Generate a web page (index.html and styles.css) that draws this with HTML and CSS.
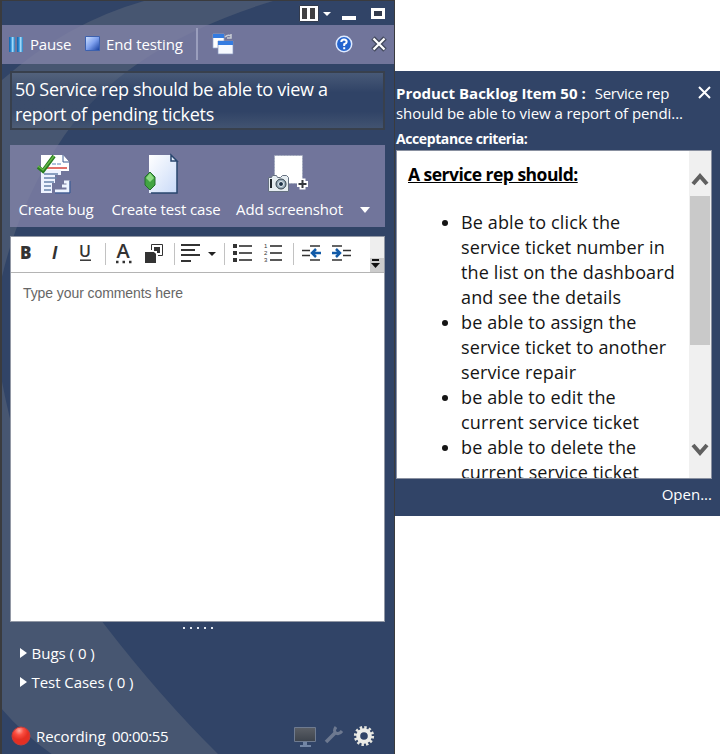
FILE: index.html
```
<!DOCTYPE html>
<html lang="en"><head><meta charset="utf-8"><title>Test Runner</title><link rel="stylesheet" href="styles.css"></head>
<body>
<div class="app">
<section class="runner">
  <svg class="backdrop" width="395" height="754" viewBox="0 0 395 754"><path fill="#475671" d="M143 0Q65 22 0 80V280Q18 200 63 135Q125 45 272 0ZM0 375Q25 515 103 623Q160 697 218 754H52Q22 733 0 707Z"/></svg>
  <div class="titlebar">
    <svg width="90" height="20" viewBox="0 0 90 20"><path fill="#fff" stroke="#333b4d" d="M2.500 .5h19v16h-19z"/><path fill="#414042" d="M5 3h5v11H5zm8 0h5v11h-5z"/><path fill="#fff" d="M26 7h8l-4 4zM45 11h14v4H45zM74 3h14v11H74z"/><path fill="#333b4d" d="M77 6h8v5h-8z"/></svg>
  </div>
  <div class="toolbar">
    <svg class="pause" width="16" height="17" viewBox="0 0 16 17"><defs><linearGradient id="pb"><stop stop-color="#1262a8"/><stop offset=".35" stop-color="#2f8fd6"/><stop offset=".6" stop-color="#a5defc"/><stop offset="1" stop-color="#1f7ac0"/></linearGradient><linearGradient id="sq" x2="1" y2="1"><stop stop-color="#d1e3ff"/><stop offset=".5" stop-color="#7ea0ee"/><stop offset="1" stop-color="#123b9b"/></linearGradient></defs><path fill="url(#pb)" d="M1 1h6v15H1z"/><path fill="url(#pb)" d="M9 1h6v15H9z"/></svg>
    <span class="lbl pauselbl">Pause</span>
    <svg class="stop" width="16" height="16" viewBox="0 0 16 16"><path fill="url(#sq)" stroke="#3d61ae" d="M1.500.5h14v14h-14z"/></svg>
    <span class="lbl endlbl">End testing</span>
    <i class="vsep"></i>
    <svg class="wins" width="23" height="22" viewBox="0 0 23 22"><path fill="#fff" stroke="#9aa9cf" stroke-width=".7" d="M1 1h11v14H1z"/><path fill="#347be0" d="M1 1h11v4H1z"/><path fill="#f6f9ff" stroke="#8797bd" stroke-width=".7" d="M6 8h15v13H6z"/><path fill="#347be0" d="M6 8h15v4H6z"/><path fill="none" stroke="#c7cbd4" stroke-width="1.500" d="M13 4q3-3 6-1m0-2v4h-4"/></svg>
    <svg class="help" width="18" height="18" viewBox="0 0 18 18"><circle cx="9" cy="9" r="7.700" fill="#2565cf" stroke="#dfeaff" stroke-width="1.500"/><path fill="none" stroke="#fff" stroke-width="2" d="M6.300 7Q6.300 4.500 9 4.500T11.700 7Q11.700 8.200 9.200 9.200V11M9.200 12.300v2"/></svg>
    <svg class="close" width="16" height="16" viewBox="0 0 16 16"><path stroke="#444a5e" stroke-width="5" d="m2 2 12 12m0-12-12 12"/><path stroke="#fff" stroke-width="2.200" d="m2.500 2.500 11 11m0-11-11 11"/></svg>
  </div>
  <div class="testtitle"><span class="t1">50 Service rep should be able to view a</span><br><span class="t2">report of pending tickets</span></div>
  <div class="actions">
    <div class="action a1"><svg width="36" height="42" viewBox="0 0 36 42"><path fill="#fff" d="M6 2h22l6 7v9H6z"/><path fill="#eef3ff" d="M6 17h20v5h-6v8h-3v10H6z"/><path fill="#fff" stroke="#3b5a92" d="M28 2v7h6"/><path stroke="#5e86ba" stroke-dasharray="4 1" d="M17 11h10"/><path stroke="#da4238" stroke-width="1.500" d="M11 15h21"/><path stroke="#6884ac" stroke-width="1.300" d="M9 21h14M9 25h13M9 29h10M9 33h7M9 37h7"/><path fill="none" stroke="#edf4ff" stroke-width="3" d="M20 38h13V29h-4m3 4h-5"/><path fill="none" stroke="#315792" d="M20 40h15V28"/><path fill="none" stroke="#287d20" stroke-width="4" d="m3 14 5 4L19 3"/><path fill="none" stroke="#65b746" stroke-width="1.500" d="m3 13 5 4L19 3"/></svg><span>Create bug</span></div>
    <div class="action a2"><svg width="36" height="42" viewBox="0 0 36 42"><defs><linearGradient id="pg" x2="1" y2="1"><stop stop-color="#fff"/><stop offset="1" stop-color="#c9daf8"/></linearGradient></defs><path fill="url(#pg)" d="M1 2h22l6 6v32H1z"/><path fill="none" stroke="#29466e" stroke-width="1.500" d="M29 8v32H3"/><path fill="#e2ebf9" stroke="#29466e" stroke-width="1.500" d="M23 2v6h6z"/><path fill="#42a442" stroke="#246f2d" d="m2 19 5 5v8l-5 5-5-5v-8z"/><path fill="#8edb83" d="m2 20 4 5-4 4-4-4z"/></svg><span>Create test case</span></div>
    <div class="action a3"><svg width="42" height="42" viewBox="0 0 42 42"><path fill="#fff" stroke="#9da5b8" stroke-dasharray="2 1" d="M7.500 2.500h28v28h-28z"/><path fill="#e6edf1" stroke="#657080" d="M1.500 24.500h3l1-2h4l1 2h3l2-2h4l2 2v14h-20z"/><path fill="#22282e" d="M3 26h2v9H3z"/><circle cx="14" cy="31" r="5" fill="#97abb9" stroke="#313e49"/><circle cx="14" cy="31" r="2.500" fill="#1f3449" stroke="#eff6fb"/><path stroke="#fff" stroke-width="6" d="M30 31h11m-5.500-5.500v11"/><path stroke="#35383d" stroke-width="2" d="M31.500 31h8m-4-4v8"/></svg><span>Add screenshot</span></div>
    <svg class="down" width="10" height="6" viewBox="0 0 10 6"><path fill="#fff" d="M0 0h10L5 6z"/></svg>
  </div>
  <div class="editor">
    <div class="format">
      <svg width="373" height="36" viewBox="0 0 373 36" fill="none" stroke="#333">
        <g class="glyphs"><text x="9" y="22" class="b">B</text><text x="41" y="22" class="i">I</text><text x="68" y="20" class="u">U</text><text x="105.500" y="21" class="fc">A</text></g>
        <path stroke-width="1.500" d="M69 23.200h11"/><path stroke-width="2.500" stroke-dasharray="2.500 4" d="M105 25h16"/>
        <path stroke="#c2c2c2" d="M94.500 6v22M163.500 6v22M213.500 6v22M282.500 6v22"/>
        <path fill="#333" stroke="none" d="M134 15h11v11h-11z"/><path fill="#fff" d="M140.500 13V7.500h11v11H147"/><path fill="#333" stroke="none" d="M143 10h6v6h-3v-2h-3z"/>
        <path stroke-width="2" d="M170 8h19M170 13h14M170 18h19M170 24h10"/><path fill="#222" stroke="none" d="M197 15h8l-4 4z"/>
        <path stroke="#222" stroke-width="1.500" d="M228 9h13M228 16h13M228 23h13M259 9h12M259 16h12M259 23h12"/><path stroke-width="4" stroke-dasharray="4 3" d="M224 7v18"/>
        <g class="nums"><text x="253" y="11">1</text><text x="253" y="18">2</text><text x="253" y="25">3</text></g>
        <path stroke-width="1.700" d="M299 9h10M291 13.500h8M291 18.500h8M299 23h10M321 9h10M332 13.500h8M332 18.500h8M321 23h10"/><path stroke="#125ba8" stroke-width="2.500" d="M310 16h-9m4-4-4 4 4 4M321 16h8m-4-4 4 4-4 4"/>
        <path fill="#eee" stroke="none" d="M359 0h14v35h-14z"/><path fill="#ccc" stroke="none" d="M359 21h14v14h-14z"/><path stroke="#111" stroke-width="2" d="M361 23h7"/><path fill="#111" stroke="none" d="M360 26h9l-4.500 5z"/>
      </svg>
    </div>
    <div class="comments">Type your comments here</div>
  </div>
  <svg class="grip" width="32" height="4" viewBox="0 0 32 4"><path stroke="#e4e9f3" stroke-width="2" stroke-dasharray="2 5" d="M1 2h30"/></svg>
  <div class="tree row1"><i></i><span>Bugs ( 0 )</span></div>
  <div class="tree row2"><i></i><span>Test Cases ( 0 )</span></div>
  <div class="status">
    <svg width="20" height="20" viewBox="0 0 20 20"><defs><radialGradient id="rd" cx=".4" cy=".2"><stop stop-color="#ffaaa0"/><stop offset=".5" stop-color="#fb4e40"/><stop offset="1" stop-color="#e42f23"/></radialGradient></defs><circle cx="10" cy="10" r="9" fill="url(#rd)" stroke="#c83c38"/></svg>
    <span class="rec">Recording</span><span class="time">00:00:55</span>
    <svg class="tools" width="82" height="24" viewBox="0 0 82 24"><defs><linearGradient id="mon" x2="0" y2="1"><stop stop-color="#5b5f66"/><stop offset="1" stop-color="#3d434c"/></linearGradient></defs><path fill="url(#mon)" stroke="#6f7b90" d="M.5 3.500h21v14H.5z"/><path fill="#7386a5" d="M9 18h4v3h4v2H6v-2h3z"/><path stroke="#6d7990" stroke-width="3.500" d="M32 18 42 8"/><path fill="none" stroke="#6d7990" stroke-width="3" d="M42 3q-3 4 0 6t6-2"/><circle cx="70" cy="12" r="8.600" fill="none" stroke="#e6e6e0" stroke-width="3" stroke-dasharray="2.400 2.103"/><circle cx="70" cy="12" r="5.800" fill="none" stroke="#ecece8" stroke-width="4"/></svg>
  </div>
</section>
<aside class="backlog">
  <header><p><b class="h1">Product Backlog Item 50 :</b><span class="h1b">Service rep</span><br><span class="h2">should be able to view a report of pendi...</span></p><svg width="13" height="13" viewBox="0 0 13 13"><path stroke="#fff" stroke-width="2" d="m1 1 11 11M12 1 1 12"/></svg></header>
  <h2>Acceptance criteria:</h2>
  <div class="criteria"><div class="copy"><h3>A service rep should:</h3>
    <ul><li>Be able to click the<br>service ticket number in<br>the list on the dashboard<br>and see the details</li><li>be able to assign the<br>service ticket to another<br>service repair</li><li>be able to edit the<br>current service ticket</li><li>be able to delete the<br>current service ticket</li></ul></div>
    <div class="scroll"><svg width="22" height="45" viewBox="0 0 22 45"><path fill="none" stroke="#606060" stroke-width="4" d="m4 33 7-8 7 8"/></svg><div class="thumb"></div><svg width="22" height="134" viewBox="0 0 22 134"><path fill="none" stroke="#606060" stroke-width="4" d="m4 100 7 8 7-8"/></svg></div>
  </div>
  <div class="open">Open...</div>
</aside>
</div>
</body></html>
```
FILE: styles.css
```
* { box-sizing: border-box; }
body { margin: 0; background: #fff; font: 15px/20px "Open Sans", sans-serif; color: #fff; }
p, h2, h3, ul { margin: 0; padding: 0; }
svg { display: block; flex: none; overflow: visible; }
.app { display: flex; align-items: flex-start; width: 720px; height: 754px; overflow: hidden; white-space: nowrap; }
.runner { position: relative; isolation: isolate; display: flex; flex-direction: column; width: 395px; height: 754px; flex: none; background: #314467; border: solid #3a3b3e; border-width: 1px 1px 0 2px; overflow: hidden; }
.backdrop { position: absolute; z-index: -1; left: -1px; top: 0; }
.titlebar { height: 24px; display: flex; justify-content: flex-end; padding: 4px 7px 0 0; }
.toolbar { height: 39px; display: flex; align-items: center; background: rgba(133, 133, 170, .77); padding: 0 7px 0 6px; }
.pauselbl { margin-left: 6px; width: 54px; letter-spacing: -.2px; }
.endlbl { margin-left: 6px; width: 90px; letter-spacing: -.1px; }
.vsep { width: 2px; height: 32px; background: #9a9ebd; }
.wins { margin-left: 14px; }
.help { margin-left: auto; margin-right: 18px; }
.testtitle { margin: 7px 9px 0 8px; height: 59px; padding: 4px 3px; border: 2px solid #38404d; background: linear-gradient(rgba(94, 110, 135, .5), rgba(47, 66, 101, .5) 35%, rgba(47, 66, 101, .5) 70%, rgba(82, 98, 122, .5)); font-size: 18px; line-height: 25px; }
.t1, .t2 { letter-spacing: -.31px; }
.actions { margin: 15px 9px 0 8px; height: 82px; display: flex; background: rgba(133, 133, 170, .77); }
.action { display: flex; flex-direction: column; align-items: center; padding-top: 8px; gap: 4px; letter-spacing: -.15px; }
.a1 { width: 92px; }
.a1 svg { margin-left: -6px; }
.a2 { width: 128px; }
.a3 { width: 119px; }
.a3 svg { margin-left: -4px; }
.down { margin: 62px 0 0 11px; }
.editor { margin: 9px 9px 0 8px; height: 388px; display: flex; flex-direction: column; background: #fff; border: 1px solid #9298a5; }
.format { height: 36px; border-bottom: 1px solid #b4b4b4; overflow: hidden; }
.glyphs text { fill: #333; stroke: none; font: 17px "Open Sans", sans-serif; }
.glyphs .b { font-weight: 800; }
.glyphs .i { font-style: italic; font-weight: 700; }
.glyphs .u { font-size: 16px; font-weight: 600; }
.glyphs .fc { font-size: 20px; font-weight: 600; }
.nums text { fill: #333; stroke: none; font: 6px "Liberation Sans", sans-serif; }
.comments { color: #666; font: 14px/20px "Liberation Sans", sans-serif; letter-spacing: -.08px; padding: 10px 12px; }
.grip { margin: 4px 0 0 180px; }
.tree { display: flex; align-items: center; height: 29px; padding-left: 18px; gap: 4.500px; }
.row1 { margin-top: 8px; }
.row2 { letter-spacing: -.05px; }
.tree i { border: solid transparent; border-width: 5px 0 5px 7px; border-left-color: #fff; }
.status { display: flex; align-items: center; height: 36px; margin-top: 22px; padding: 0 18px 0 9px; letter-spacing: -.3px; }
.rec { margin-left: 5px; width: 76px; letter-spacing: -.1px; }
.time { letter-spacing: -.4px; }
.tools { margin-left: auto; }
.backlog { width: 325px; height: 445px; margin-top: 71px; background: #314467; padding: 12px 8px 0 1px; display: flex; flex-direction: column; }
.backlog header { display: flex; justify-content: space-between; height: 46px; }
.backlog header svg { margin: 3px 1px; }
.h1b { margin-left: 9px; letter-spacing: -.25px; }
.h2 { letter-spacing: -.07px; }
.backlog h2 { font-size: 14px; line-height: 20px; height: 21px; letter-spacing: -.4px; }
.criteria { height: 329px; background: #fff; border: 1px solid #8990a0; display: flex; overflow: hidden; color: #151515; }
.copy { flex: 1; padding: 10px 0 0 11px; font-size: 18px; line-height: 25px; letter-spacing: .13px; }
.copy h3 { font-size: 17.500px; line-height: 26px; text-decoration: underline; color: #000; letter-spacing: -.52px; }
.copy ul { margin-top: 23px; padding-left: 53px; }
.scroll { width: 22px; background: #f0f0f0; }
.thumb { height: 149px; margin: 0 1px; background: #c9c9c9; }
.open { text-align: right; margin-top: 5px; }
```
